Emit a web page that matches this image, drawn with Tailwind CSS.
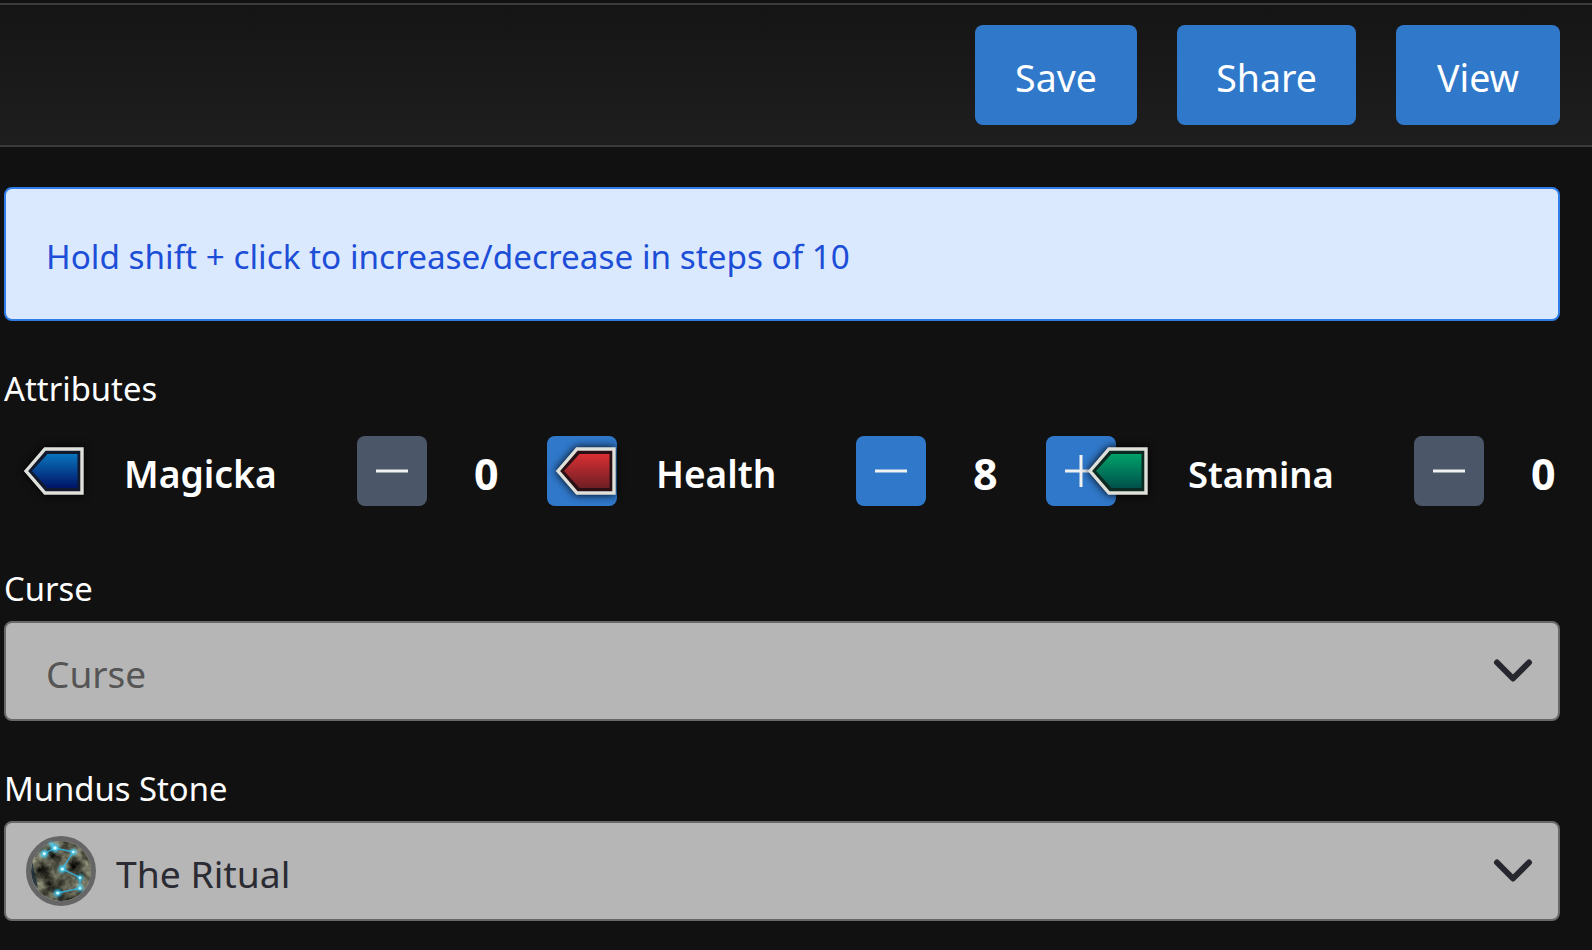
<!DOCTYPE html>
<html lang="en">
<head>
  <meta charset="UTF-8" />
  <title>Build editor</title>
  <script src="https://cdn.jsdelivr.net/npm/@tailwindcss/browser@4"></script>
</head>
<body class="bg-[#111111] text-white font-['Noto_Sans',sans-serif] w-[1592px] h-[950px] overflow-hidden">
  <svg class="absolute w-0 h-0">
    <defs>
      <linearGradient id="blue" x1="0" y1="0" x2="0" y2="1"><stop offset="0" stop-color="#0a74bd" /><stop offset="1" stop-color="#001466" /></linearGradient>
      <linearGradient id="red" x1="0" y1="0" x2="0" y2="1"><stop offset="0" stop-color="#d92f33" /><stop offset="1" stop-color="#6e1f24" /></linearGradient>
      <linearGradient id="green" x1="0" y1="0" x2="0" y2="1"><stop offset="0" stop-color="#00a26a" /><stop offset="1" stop-color="#00504a" /></linearGradient>
      <filter id="rock" x="0" y="0" width="100%" height="100%" color-interpolation-filters="sRGB">
        <feTurbulence type="fractalNoise" baseFrequency="0.07" numOctaves="4" seed="7" />
        <feColorMatrix values="1.1 0 0 0 -0.22  1.1 0 0 0 -0.22  0.95 0 0 0 -0.2  0 0 0 0 1" />
      </filter>
      <filter id="glow" x="-100%" y="-100%" width="300%" height="300%"><feGaussianBlur stdDeviation="1.6" /></filter>
      <clipPath id="stone"><circle cx="35" cy="35" r="30" /></clipPath>
    </defs>
  </svg>

  <div class="h-[144px] mt-[3px] border-t-2 border-b-2 border-[#3a3a3a] bg-gradient-to-b from-[#151515] to-[#1e1e1e] flex items-center justify-end gap-10 pr-8">
    <button class="h-[100px] w-[162px] pt-[6px] bg-[#3078ca] rounded-lg text-[37.5px]">Save</button>
    <button class="h-[100px] w-[179px] pt-[6px] bg-[#3078ca] rounded-lg text-[37.5px]">Share</button>
    <button class="h-[100px] w-[164px] pt-[6px] bg-[#3078ca] rounded-lg text-[37.5px]">View</button>
  </div>

  <div class="pl-[4px] pr-8 pt-10">
    <div class="h-[134px] bg-[#dbe9ff] border-2 border-[#2f7de8] rounded-lg flex items-center pl-[40px] pt-[5px] text-[#1d4ed8] text-[33.3px]">Hold shift + click to increase/decrease in steps of 10</div>

    <div class="text-[32.8px] mt-[43px] h-[50px] leading-[50px]">Attributes</div>
    <div class="flex mt-[22px] pl-[18px] h-[70px] overflow-hidden overflow-y-visible">
      <div class="w-[532px] shrink-0 flex items-center">
        <svg class="w-16 h-16 shrink-0 drop-shadow-[0_0_4px_#000]" viewBox="0 0 64 64"><polygon points="4,32 23,10 60,10 60,54 23,54" fill="#11192e" stroke="#dfe0da" stroke-width="3.4" /><polygon points="10,32 25.5,15 55.5,15 55.5,49 25.5,49" fill="url(#blue)" /></svg>
        <span class="ml-[38px] mr-[82px] pt-[6px] text-[37.3px] font-semibold w-[151px] whitespace-nowrap">Magicka</span>
        <button class="w-[70px] h-[70px] shrink-0 rounded-lg bg-[#4b5768] flex items-center justify-center"><svg class="w-9 h-9" viewBox="0 0 36 36"><path d="M2 18h32" stroke="#f1f1f1" stroke-width="3" /></svg></button>
        <span class="ml-[47px] mr-[48px] w-[28px] pt-[6px] text-center text-[43px] font-bold">0</span>
        <button class="w-[70px] h-[70px] shrink-0 rounded-lg bg-[#3078ca] flex items-center justify-center"><svg class="w-9 h-9" viewBox="0 0 36 36"><path d="M2 18h32M18 2v32" stroke="#f1f1f1" stroke-width="3" /></svg></button>
      </div>
      <div class="w-[532px] shrink-0 flex items-center">
        <svg class="w-16 h-16 shrink-0 drop-shadow-[0_0_4px_#000]" viewBox="0 0 64 64"><polygon points="4,32 23,10 60,10 60,54 23,54" fill="#2a0f14" stroke="#dfe0da" stroke-width="3.4" /><polygon points="10,32 25.5,15 55.5,15 55.5,49 25.5,49" fill="url(#red)" /></svg>
        <span class="ml-[38px] mr-[82px] pt-[6px] text-[37px] font-semibold w-[118px] whitespace-nowrap">Health</span>
        <button class="w-[70px] h-[70px] shrink-0 rounded-lg bg-[#3078ca] flex items-center justify-center"><svg class="w-9 h-9" viewBox="0 0 36 36"><path d="M2 18h32" stroke="#f1f1f1" stroke-width="3" /></svg></button>
        <span class="ml-[47px] mr-[48px] w-[28px] pt-[6px] text-center text-[43px] font-bold">8</span>
        <button class="w-[70px] h-[70px] shrink-0 rounded-lg bg-[#3078ca] flex items-center justify-center"><svg class="w-9 h-9" viewBox="0 0 36 36"><path d="M2 18h32M18 2v32" stroke="#f1f1f1" stroke-width="3" /></svg></button>
      </div>
      <div class="w-[532px] shrink-0 flex items-center">
        <svg class="w-16 h-16 shrink-0 drop-shadow-[0_0_4px_#000]" viewBox="0 0 64 64"><polygon points="4,32 23,10 60,10 60,54 23,54" fill="#0b2a22" stroke="#dfe0da" stroke-width="3.4" /><polygon points="10,32 25.5,15 55.5,15 55.5,49 25.5,49" fill="url(#green)" /></svg>
        <span class="ml-[38px] mr-[82px] pt-[6px] text-[36.4px] font-semibold w-[144px] whitespace-nowrap">Stamina</span>
        <button class="w-[70px] h-[70px] shrink-0 rounded-lg bg-[#4b5768] flex items-center justify-center"><svg class="w-9 h-9" viewBox="0 0 36 36"><path d="M2 18h32" stroke="#f1f1f1" stroke-width="3" /></svg></button>
        <span class="ml-[47px] mr-[48px] w-[28px] pt-[6px] text-center text-[43px] font-bold">0</span>
        <button class="w-[70px] h-[70px] shrink-0 rounded-lg bg-[#3078ca] flex items-center justify-center"><svg class="w-9 h-9" viewBox="0 0 36 36"><path d="M2 18h32M18 2v32" stroke="#f1f1f1" stroke-width="3" /></svg></button>
      </div>
    </div>

    <div class="text-[32.8px] mt-[58px] h-[50px] leading-[50px]">Curse</div>
    <div class="h-[100px] mt-[7px] bg-[#b6b6b6] border-2 border-[#686868] rounded-lg flex items-center pl-[40px] pr-[26px] justify-between">
      <span class="text-[37px] pt-[6px] text-[#555555]">Curse</span>
      <svg class="w-[42px] h-[26px] mr-[-2px]" viewBox="0 0 42 26"><path d="M5 4.500l16 16L37 4.500" fill="none" stroke="#27272f" stroke-width="6" stroke-linecap="round" stroke-linejoin="round" /></svg>
    </div>

    <div class="text-[32.8px] mt-[43px] h-[50px] leading-[50px]">Mundus Stone</div>
    <div class="h-[100px] mt-[7px] bg-[#b6b6b6] border-2 border-[#686868] rounded-lg flex items-center pl-[20px] pr-[26px] justify-between">
      <div class="flex items-center">
        <svg class="w-[70px] h-[70px]" viewBox="0 0 70 70">
          <g clip-path="url(#stone)"><rect width="70" height="70" filter="url(#rock)" /><path d="M5 20Q9 38 12 52L4 44Z" fill="#0e2233" opacity=".7" /></g>
          <circle cx="35" cy="35" r="32.5" fill="none" stroke="#666666" stroke-width="5" />
          <path d="M18.3 17.7L29 12L47.3 16L36.3 33L54 41.7L54 52.3L31.7 57" fill="none" stroke="#37a9cf" stroke-width="1.4" />
          <g fill="#3fd4ff" filter="url(#glow)"><circle cx="18.3" cy="17.7" r="3.5" /><circle cx="29" cy="12" r="3.8" /><circle cx="47.3" cy="16" r="3" /><circle cx="36.3" cy="33" r="3.5" /><circle cx="54" cy="41.7" r="3" /><circle cx="54" cy="52.3" r="3" /><circle cx="31.7" cy="57" r="3.5" /><circle cx="25" cy="8" r="2" /></g>
          <g fill="#d8f8ff"><circle cx="18.3" cy="17.7" r="1.6" /><circle cx="29" cy="12" r="1.8" /><circle cx="47.3" cy="16" r="1.2" /><circle cx="36.3" cy="33" r="1.6" /><circle cx="54" cy="41.7" r="1.2" /><circle cx="54" cy="52.3" r="1.2" /><circle cx="31.7" cy="57" r="1.6" /></g>
        </svg>
        <span class="ml-[20px] text-[37.3px] pt-[6px] text-[#2b2b33]">The Ritual</span>
      </div>
      <svg class="w-[42px] h-[26px] mr-[-2px]" viewBox="0 0 42 26"><path d="M5 4.500l16 16L37 4.500" fill="none" stroke="#27272f" stroke-width="6" stroke-linecap="round" stroke-linejoin="round" /></svg>
    </div>
  </div>
</body>
</html>
